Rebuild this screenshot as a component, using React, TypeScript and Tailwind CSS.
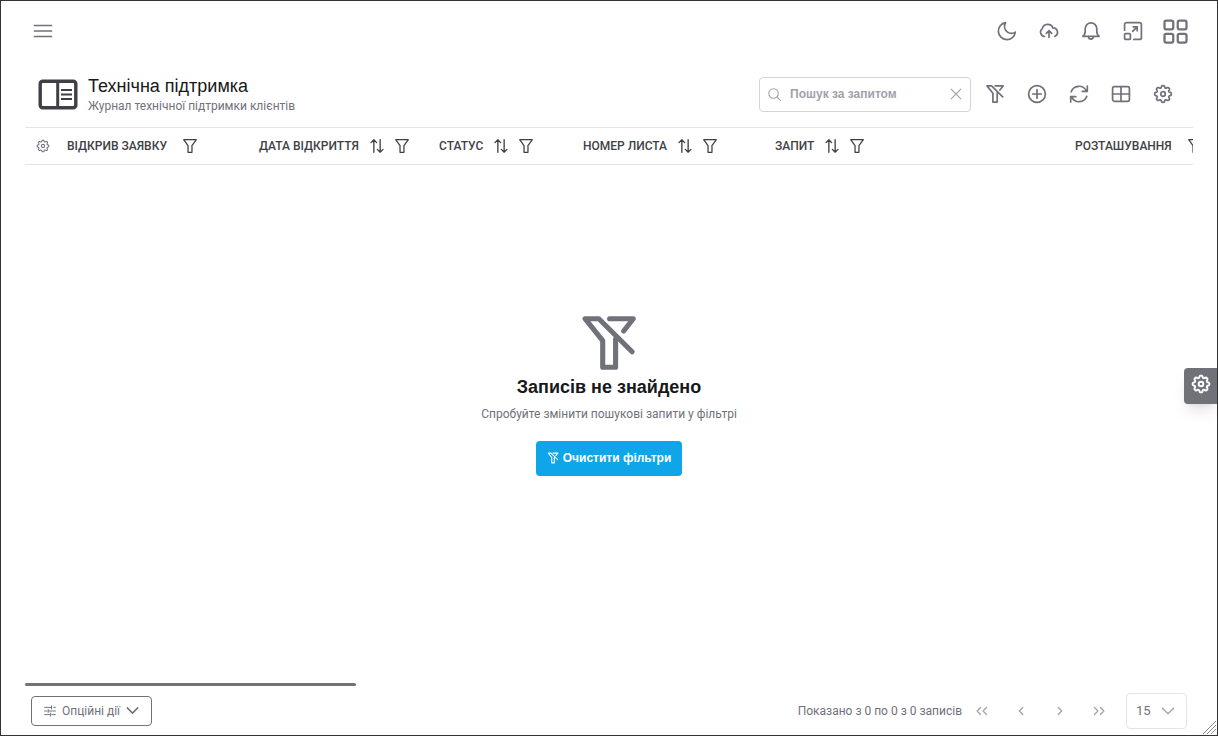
import type { ReactNode } from "react";

type IconProps = { className?: string; strokeWidth?: number };

function Icon({
  className = "size-5",
  strokeWidth = 1.7,
  children,
}: IconProps & { children: ReactNode }) {
  return (
    <svg
      viewBox="0 0 20 20"
      fill="none"
      stroke="currentColor"
      strokeWidth={strokeWidth}
      strokeLinecap="round"
      strokeLinejoin="round"
      aria-hidden="true"
      className={`shrink-0 ${className}`}
    >
      {children}
    </svg>
  );
}

const gearOutline = (() => {
  const points: string[] = [];
  for (let i = 0; i < 144; i++) {
    const angle = (i / 144) * Math.PI * 2;
    const wave = Math.cos(8 * angle);
    const radius = 7.3 + 1.1 * Math.tanh(1.6 * wave + 0.3);
    points.push(
      `${(10 + radius * Math.sin(angle)).toFixed(2)} ${(10 - radius * Math.cos(angle)).toFixed(2)}`,
    );
  }
  return `M${points.join("L")}Z`;
})();

const Gear = (p: IconProps) => (
  <Icon {...p}>
    <path d={gearOutline} />
    <circle cx="10" cy="10" r="2.3" />
  </Icon>
);
const Menu = (p: IconProps) => (
  <Icon {...p}>
    <path d="M1.5 4.5h17M1.5 10h17M1.5 15.5h17" />
  </Icon>
);
const Moon = (p: IconProps) => (
  <Icon {...p}>
    <path d="M8.6 1.7a6.9 6.9 0 0 0 9.7 9.4A8.5 8.5 0 1 1 8.6 1.7Z" />
  </Icon>
);
const CloudUpload = (p: IconProps) => (
  <Icon {...p}>
    <path d="M5.6 15.5A4.4 4.4 0 0 1 3.3 7.6A5.6 5.6 0 0 1 13.9 6.9A4.4 4.4 0 0 1 15.9 15.3" />
    <path d="M10 16.3V9.8M7.3 12.3L10 9.6l2.7 2.7" />
  </Icon>
);
const Bell = (p: IconProps) => (
  <Icon {...p}>
    <path d="M1.9 15.3h16.2c-1.900-1.300-2.300-2.500-2.300-5.300V7.800A5.800 5.800 0 0 0 10 1.900a5.800 5.800 0 0 0-5.800 5.900V10c0 2.800-.4 4-2.300 5.300Z" />
    <path d="M7.6 15.7a2.400 2.400 0 0 0 4.800 0" />
  </Icon>
);
const Maximize = (p: IconProps) => (
  <Icon {...p}>
    <path d="M1.6 9.200V3.600a2 2 0 0 1 2-2h12.800a2 2 0 0 1 2 2v12.800a2 2 0 0 1-2 2h-5.600" />
    <rect x="1.6" y="12.6" width="5.8" height="5.8" rx="1" />
    <path d="M9.6 10.400L14.200 5.800M10.200 5.800h4v4" />
  </Icon>
);
const Apps = (p: IconProps) => (
  <Icon {...p}>
    <rect x="1.2" y="1.2" width="7" height="7" rx="1.4" />
    <rect x="11.8" y="1.2" width="7" height="7" rx="1.4" />
    <rect x="1.2" y="11.8" width="7" height="7" rx="1.4" />
    <rect x="11.8" y="11.8" width="7" height="7" rx="1.4" />
  </Icon>
);
const FilterSlash = (p: IconProps) => (
  <Icon {...p}>
    <path d="M17.700 12.900L6.600 1.900H2L7.900 9.200v8.900h4.300V8.700" />
    <path d="M10.200 1.900h7.900L14.900 6" />
  </Icon>
);
const Filter = (p: IconProps) => (
  <Icon {...p}>
    <path d="M1 1h18l-6.200 8.600V19H7.200V9.600Z" />
  </Icon>
);
const SortArrows = (p: IconProps) => (
  <Icon {...p}>
    <path d="M5.500 19V1.300M1.500 5.200l4-4 4 4M14.500 1v17.700M10.500 14.800l4 4 4-4" />
  </Icon>
);
const PlusCircle = (p: IconProps) => (
  <Icon {...p}>
    <circle cx="10" cy="10" r="8.4" />
    <path d="M10 5.700v8.600M5.700 10h8.600" />
  </Icon>
);
const Refresh = (p: IconProps) => (
  <Icon {...p}>
    <path d="M2.200 7.700A8.200 8.200 0 0 1 17.300 6.900M18.300 2v5.300h-5.100M17.800 12.300A8.200 8.200 0 0 1 2.700 13.100M1.700 18v-5.300h5.100" />
  </Icon>
);
const GridIcon = (p: IconProps) => (
  <Icon {...p}>
    <rect x="1.6" y="2.7" width="16.8" height="14.6" rx="1.8" />
    <path d="M10 2.700v14.600M1.600 10h16.800" />
  </Icon>
);
const SearchIcon = (p: IconProps) => (
  <Icon {...p}>
    <circle cx="8.5" cy="8.5" r="7.3" />
    <path d="M14 14l5 5" />
  </Icon>
);
const Close = (p: IconProps) => (
  <Icon {...p}>
    <path d="M2 2l16 16M18 2L2 18" />
  </Icon>
);
const Chevron = (p: IconProps) => (
  <Icon {...p}>
    <path d="M2 6l8 8 8-8" />
  </Icon>
);
const Sliders = (p: IconProps) => (
  <Icon {...p}>
    <path d="M1 4h11.500M16 4h3M12.500 1.500v5M1 10h4M8 10h11M7 7.500v5M1 16h8.500M13 16h6M11 13.500v5" />
  </Icon>
);
const AngleLeft = (p: IconProps) => (
  <Icon {...p}>
    <path d="M12.500 5l-5 5 5 5" />
  </Icon>
);
const AngleRight = (p: IconProps) => (
  <Icon {...p}>
    <path d="M7.500 5l5 5-5 5" />
  </Icon>
);
const AngleDoubleLeft = (p: IconProps) => (
  <Icon {...p}>
    <path d="M8 5l-5 5 5 5M16.500 5l-5 5 5 5" />
  </Icon>
);
const AngleDoubleRight = (p: IconProps) => (
  <Icon {...p}>
    <path d="M3.500 5l5 5-5 5M12 5l5 5-5 5" />
  </Icon>
);

function IconButton({ label, children }: { label: string; children: ReactNode }) {
  return (
    <button
      type="button"
      aria-label={label}
      className="flex size-[42px] items-center justify-center text-[#71717a]"
    >
      {children}
    </button>
  );
}

function PageButton({ label, children }: { label: string; children: ReactNode }) {
  return (
    <button
      type="button"
      aria-label={label}
      disabled
      className="flex h-9 w-[39px] items-center justify-center text-[#a1a1aa]"
    >
      {children}
    </button>
  );
}

const columns = [
  { title: "Відкрив заявку", width: "w-[192px]", sortable: false },
  { title: "Дата відкриття", width: "w-[180px]", sortable: true },
  { title: "Статус", width: "w-[144px]", sortable: true },
  { title: "Номер листа", width: "w-[192px]", sortable: true },
  { title: "Запит", width: "w-[300px]", sortable: true },
  { title: "Розташування", width: "w-[192px]", sortable: false },
];

export default function App() {
  return (
    <div className="relative flex min-h-screen flex-col border border-[#333336] bg-white font-['Roboto','Liberation_Sans',sans-serif] text-xs text-[#71717a]">
      <header className="flex h-[60px] items-center justify-between px-[21px]">
        <IconButton label="Меню">
          <Menu />
        </IconButton>
        <div className="flex">
          <IconButton label="Темна тема">
            <Moon />
          </IconButton>
          <IconButton label="Завантаження">
            <CloudUpload />
          </IconButton>
          <IconButton label="Сповіщення">
            <Bell />
          </IconButton>
          <IconButton label="На весь екран">
            <Maximize />
          </IconButton>
          <IconButton label="Застосунки">
            <Apps className="size-[25px]" strokeWidth={1.8} />
          </IconButton>
        </div>
      </header>

      <main className="flex flex-1 flex-col px-6">
        <div className="flex h-[66px] items-center justify-between pr-[9px] pl-[13px]">
          <div className="flex items-center gap-[10px]">
            <svg viewBox="0 0 40 32" aria-hidden="true" className="h-8 w-10 text-[#3f3f46]">
              <rect x="2.2" y="3.2" width="35.6" height="26.6" rx="2.5" fill="none" stroke="currentColor" strokeWidth="3.4" />
              <path d="M19.700 3v27" stroke="currentColor" strokeWidth="3" />
              <path d="M23 12h11M23 16.500h11M23 21h11" stroke="currentColor" strokeWidth="2.2" />
            </svg>
            <div className="flex flex-col pb-px">
              <h1 className="font-['Liberation_Sans',sans-serif] text-lg leading-6 text-[#18181b]">
                Технічна підтримка
              </h1>
              <p className="leading-4">Журнал технічної підтримки клієнтів</p>
            </div>
          </div>
          <div className="flex items-center gap-[3px]">
            <label className="flex h-[35px] w-[212px] items-center gap-[9px] rounded border border-[#d4d4d8] px-2 text-[#a1a1aa]">
              <SearchIcon className="size-[13px]" strokeWidth={1.6} />
              <input
                type="text"
                aria-label="Пошук за запитом"
                placeholder="Пошук за запитом"
                className="min-w-0 flex-1 font-['Liberation_Sans',sans-serif] font-bold outline-none placeholder:text-[#a1a1aa]"
              />
              <button type="button" aria-label="Очистити пошук">
                <Close className="size-3" strokeWidth={2} />
              </button>
            </label>
            <div className="flex">
              <IconButton label="Скинути фільтри">
                <FilterSlash />
              </IconButton>
              <IconButton label="Додати">
                <PlusCircle />
              </IconButton>
              <IconButton label="Оновити">
                <Refresh />
              </IconButton>
              <IconButton label="Таблиця">
                <GridIcon />
              </IconButton>
              <IconButton label="Налаштування">
                <Gear />
              </IconButton>
            </div>
          </div>
        </div>

        <div className="overflow-hidden">
          <table className="w-[1236px] table-fixed border-collapse">
            <thead>
              <tr className="h-[37px] border-y border-[#e4e4e7]">
                <th className="w-9 p-0">
                  <button type="button" aria-label="Налаштувати стовпці" className="flex w-full items-center justify-center">
                    <Gear className="size-[14px]" strokeWidth={1.5} />
                  </button>
                </th>
                {columns.map((column) => (
                  <th key={column.title} scope="col" className={`p-0 pl-[6px] text-left ${column.width}`}>
                    <div className={`flex items-center text-[#3f3f46] ${column.sortable ? "gap-[11px]" : "gap-4"}`}>
                      <span className="font-medium whitespace-nowrap uppercase">{column.title}</span>
                      {column.sortable && (
                        <button type="button" aria-label={`Сортувати: ${column.title}`}>
                          <SortArrows className="size-[14px]" strokeWidth={1.9} />
                        </button>
                      )}
                      <button type="button" aria-label={`Фільтр: ${column.title}`}>
                        <Filter className="size-[14px]" strokeWidth={1.8} />
                      </button>
                    </div>
                  </th>
                ))}
              </tr>
            </thead>
          </table>
        </div>

        <section className="flex flex-1 flex-col items-center justify-center pb-[60px]">
          <FilterSlash className="size-[60px]" strokeWidth={1.7} />
          <h2 className="mt-[2px] font-['Liberation_Sans',sans-serif] text-lg leading-6 font-bold text-[#18181b]">
            Записів не знайдено
          </h2>
          <p className="mt-[7px] leading-4">Спробуйте змінити пошукові запити у фільтрі</p>
          <button
            type="button"
            className="mt-[19px] flex h-[35px] items-center gap-1 rounded bg-[#0ea5e9] px-[11px] pb-px font-['Liberation_Sans',sans-serif] font-bold text-white"
          >
            <FilterSlash className="size-3" strokeWidth={1.8} />
            Очистити фільтри
          </button>
        </section>

        <div className="h-[3px] w-[331px] rounded-full bg-[#71717a]" />

        <footer className="flex h-[49px] items-center justify-between px-[6px]">
          <button
            type="button"
            className="flex h-[30px] items-center gap-[6px] rounded border border-[#71717a] px-3"
          >
            <Sliders className="size-3" strokeWidth={1.6} />
            Опційні дії
            <Chevron className="size-[13px]" strokeWidth={2.3} />
          </button>
          <div className="flex items-center">
            <span>Показано з 0 по 0 з 0 записів</span>
            <PageButton label="Перша сторінка">
              <AngleDoubleLeft className="size-[14px]" strokeWidth={1.8} />
            </PageButton>
            <PageButton label="Попередня сторінка">
              <AngleLeft className="size-[14px]" strokeWidth={1.8} />
            </PageButton>
            <PageButton label="Наступна сторінка">
              <AngleRight className="size-[14px]" strokeWidth={1.8} />
            </PageButton>
            <PageButton label="Остання сторінка">
              <AngleDoubleRight className="size-[14px]" strokeWidth={1.8} />
            </PageButton>
            <div className="relative ml-2 flex items-center">
              <select
                aria-label="Записів на сторінці"
                defaultValue="15"
                className="h-9 w-[61px] appearance-none rounded border border-[#e4e4e7] bg-white pl-[9px] text-[13px]"
              >
                <option>15</option>
                <option>30</option>
                <option>50</option>
              </select>
              <Chevron className="pointer-events-none absolute right-3 size-[14px] text-[#a1a1aa]" strokeWidth={1.8} />
            </div>
          </div>
        </footer>
      </main>

      <button
        type="button"
        aria-label="Панель налаштувань"
        className="absolute top-1/2 right-0 flex h-9 w-[33px] items-center justify-center rounded-l bg-[#71717a] pb-1 text-white shadow-lg"
      >
        <Gear strokeWidth={1.9} />
      </button>
      <svg
        viewBox="0 0 13 13"
        aria-hidden="true"
        className="absolute right-px bottom-px size-[13px] text-[#8a8a8a]"
        stroke="currentColor"
      >
        <path d="M0 13L13 0M4 13L13 4M8 13L13 8" />
      </svg>
    </div>
  );
}
